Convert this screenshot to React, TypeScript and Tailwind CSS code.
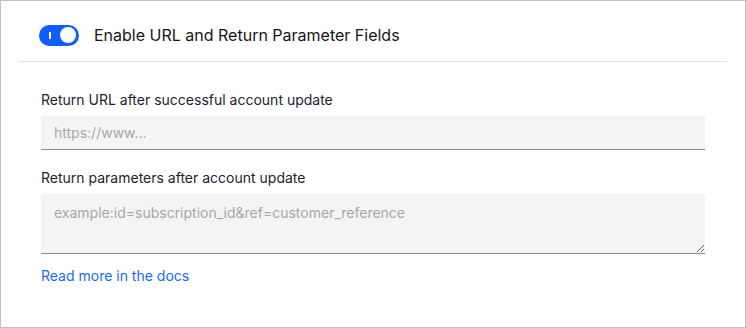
import React from "react";

export default function App() {
  return (
    <div
      className="w-[746px] h-[328px] border border-[#c1c1c1] bg-white box-border"
      style={{ fontFamily: "Inter, 'Noto Sans', sans-serif" }}
    >
      <div className="mx-[18px] pt-[23px] pb-[15px] border-b border-[#e0e0e0]">
        <div className="flex items-center h-[22px] pl-[20px]">
          <button
            type="button"
            className="relative w-[40px] h-[21px] rounded-full bg-[#0f5cff] flex items-center shrink-0"
            aria-pressed="true"
          >
            <span className="absolute left-[10px] top-[7px] w-[2px] h-[7px] bg-white" />
            <span className="absolute right-[3px] top-[2.5px] w-[16px] h-[16px] rounded-full bg-white" />
          </button>
          <span className="ml-[15px] text-[16px] leading-[22px] text-[#161616]">
            Enable URL and Return Parameter Fields
          </span>
        </div>
      </div>
      <div className="px-[40px] pt-[28px]">
        <label className="block text-[14px] leading-[20px] text-[#1c2330]">
          Return URL after successful account update
        </label>
        <input
          className="mt-[6px] block w-full h-[34px] bg-[#f4f4f4] border-b border-[#8d8d8d] px-[13px] text-[14px] text-[#161616] placeholder:text-[#a8a8a8] outline-none"
          placeholder="https://www..."
        />
        <label className="mt-[18px] block text-[14px] leading-[20px] text-[#1c2330]">
          Return parameters after account update
        </label>
        <textarea
          className="mt-[6px] block w-full h-[60px] bg-[#f4f4f4] border-b border-[#8d8d8d] px-[13px] pt-[9px] text-[14px] leading-[20px] text-[#161616] placeholder:text-[#a8a8a8] outline-none"
          placeholder="example:id=subscription_id&ref=customer_reference"
        />
        <a href="#" className="mt-[12px] block w-fit text-[14px] leading-[20px] text-[#1a6cf0]">
          Read more in the docs
        </a>
      </div>
    </div>
  );
}
